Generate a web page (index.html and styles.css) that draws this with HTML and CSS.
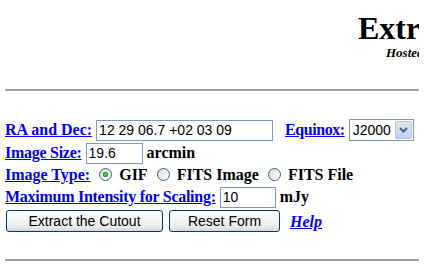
FILE: index.html
```html
<!DOCTYPE html>
<html>
<head>
<meta charset="utf-8">
<title>Extract a Cutout</title>
<link rel="stylesheet" href="styles.css">
</head>
<body>
<div class="header">
  <h1 class="title">Extract an Image Cutout</h1>
  <div class="subtitle">Hosted by the Archive</div>
</div>
<hr class="rule rule-top">
<form class="cutout-form">
  <div class="row row-first">
    <a class="label" href="#">RA and Dec:</a> <input class="field field-radec" type="text" value="12 29 06.7 +02 03 09">&nbsp;&nbsp; <a class="label label-tight" href="#">Equinox:</a> <span class="select-wrap"><select class="select"><option>J2000</option><option>B1950</option></select><span class="dd-btn"><svg width="9" height="6" viewBox="0 0 9 6"><path d="M1 1 L4.5 4.5 L8 1" fill="none" stroke="#4d6185" stroke-width="2"/></svg></span></span>
  </div>
  <div class="row">
    <a class="label label-snug" href="#">Image Size:</a> <input class="field field-size" type="text" value="19.6"> <b class="unit">arcmin</b>
  </div>
  <div class="row">
    <a class="label" href="#">Image Type:</a> <input class="radio" type="radio" name="t" checked> <b class="opt">GIF</b> <input class="radio" type="radio" name="t"> <b class="opt">FITS Image</b> <input class="radio" type="radio" name="t"> <b class="opt">FITS File</b>
  </div>
  <div class="row">
    <a class="label label-snug" href="#">Maximum Intensity for Scaling:</a> <input class="field field-max" type="text" value="10"> <b class="unit">mJy</b>
  </div>
  <div class="row row-buttons">
    <button class="btn btn-extract" type="button">Extract the Cutout</button> <button class="btn btn-reset" type="reset">Reset Form</button> <a class="help" href="#">Help</a>
  </div>
</form>
<hr class="rule rule-bottom">
</body>
</html>
```
FILE: styles.css
```css
html, body {
  overflow: hidden;
  background: #fff;
}
body {
  margin: 0 5px;
  font-family: "Liberation Serif", "Times New Roman", serif;
  color: #000;
}
.header {
  padding-left: 353px;
  white-space: nowrap;
}
.title {
  margin: 12px 0 0;
  font-size: 32px;
  line-height: 33px;
  font-weight: bold;
}
.subtitle {
  margin-top: 0;
  padding-left: 28px;
  font-size: 13px;
  line-height: 16px;
  font-weight: bold;
  font-style: italic;
}
.rule {
  border: 0;
  border-top: 2px solid #a0a0a0;
  height: 0;
  margin: 0;
}
.rule-top {
  margin-top: 28px;
}
.rule-bottom {
  margin-top: 25px;
}
.cutout-form {
  margin: 28px 0 0;
}
.row {
  height: 22px;
  line-height: 22px;
  font-size: 16px;
  white-space: nowrap;
}
.row-first {
  height: 23px;
}
.label {
  color: #0000ff;
  font-weight: bold;
  text-decoration: underline;
}
.label-snug {
  letter-spacing: -0.27px;
}
.label-tight {
  letter-spacing: -0.45px;
}
.unit, .opt {
  font-weight: bold;
}
.field {
  box-sizing: border-box;
  height: 21px;
  border: 1px solid #7f9db9;
  padding: 1px 2px;
  margin: 0;
  font: 14px "Liberation Sans", Arial, sans-serif;
  color: #000;
  vertical-align: baseline;
  outline: none;
}
.field-radec { width: 177px; }
.field-size { width: 57px; }
.field-max { width: 56px; }
.select-wrap {
  display: inline-flex;
  align-items: center;
  box-sizing: border-box;
  width: 65px;
  height: 22px;
  border: 1px solid #7f9db9;
  background: #fff;
  vertical-align: baseline;
}
.select {
  appearance: none;
  -webkit-appearance: none;
  border: 0;
  background: transparent;
  flex: 1;
  min-width: 0;
  padding: 0 0 0 3px;
  margin: 0;
  font: 14px "Liberation Sans", Arial, sans-serif;
  color: #000;
  outline: none;
}
.dd-btn {
  display: flex;
  align-items: center;
  justify-content: center;
  box-sizing: border-box;
  width: 17px;
  height: 18px;
  margin-right: 1px;
  border: 1px solid #b9c6e2;
  border-radius: 2px;
  background: linear-gradient(#dfe6f7, #c3cfee);
}
.radio {
  appearance: none;
  -webkit-appearance: none;
  box-sizing: border-box;
  width: 13px;
  height: 13px;
  margin: 3px 3px 0 5px;
  border: 1px solid #33628c;
  border-radius: 50%;
  background: linear-gradient(135deg, #d8d8d2, #f4f4f2 70%, #ffffff);
  vertical-align: -1px;
}
.radio:checked {
  background:
    radial-gradient(circle, #5bd85b 0, #21a121 2.5px, transparent 3px),
    linear-gradient(135deg, #d8d8d2, #f4f4f2 70%, #ffffff);
}
.row-buttons {
  height: 24px;
  line-height: 24px;
  margin-top: 2px;
}
.btn {
  box-sizing: border-box;
  height: 22px;
  padding: 0;
  margin: 0;
  border: 1px solid #003c74;
  border-radius: 3px;
  background: linear-gradient(#ffffff 0%, #f7f7f5 35%, #ececf0 75%, #d6d6e3 100%);
  font: 14px "Liberation Sans", Arial, sans-serif;
  color: #000;
  vertical-align: top;
}
.btn-extract {
  width: 157px;
  margin-left: 1px;
}
.btn-reset {
  width: 111px;
  margin-left: 2px;
}
.help {
  margin-left: 6px;
  color: #0000ff;
  font-weight: bold;
  font-style: italic;
  text-decoration: underline;
}
```
